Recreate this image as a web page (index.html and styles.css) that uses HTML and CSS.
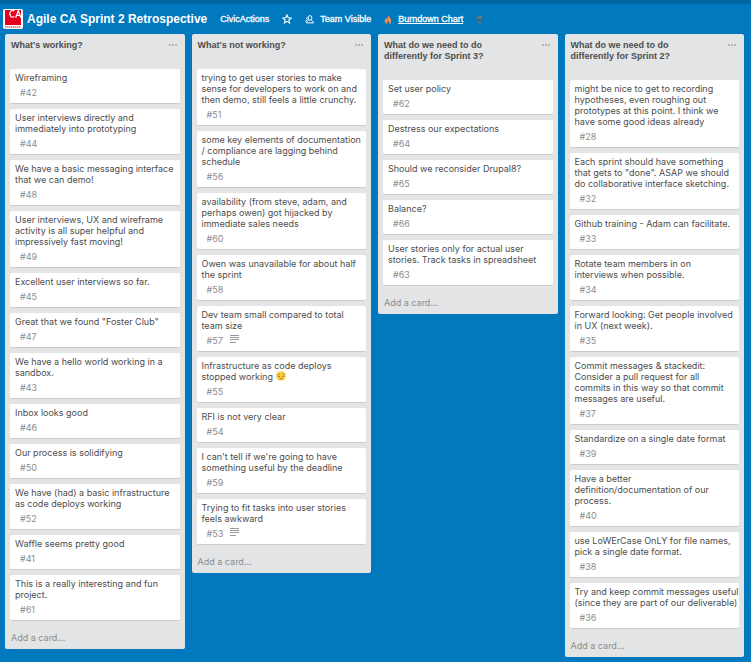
FILE: index.html
```html
<!DOCTYPE html>
<html lang="en">
<head>
<meta charset="utf-8">
<title>Agile CA Sprint 2 Retrospective</title>
<link rel="stylesheet" href="styles.css">
</head>
<body>
<svg class="defs" aria-hidden="true">
  <symbol id="lines" viewBox="0 0 9 8"><path d="M0 .5h9M0 2.500h9M0 4.500h9M0 7.500h6" stroke="#999" stroke-width="1"/></symbol>
  <symbol id="dots" viewBox="0 0 8 2"><path d="M0 0h2v2H0zM3 0h2v2H3zM6 0h2v2H6z" fill="#b3b5b7"/></symbol>
</svg>
<header class="board-header">
  <svg class="logo" viewBox="0 0 20 20" aria-hidden="true">
    <rect width="20" height="20" rx="2" fill="#fff"/>
    <rect x="2" y="1" width="16" height="15" fill="#e4001b"/>
    <path d="M11.300 2.200C9.500.6 6.800 1.800 6.800 4.800s2.700 4.300 4.500 2.600M12.700 8.800 15.300 1.500 17.900 8.800M13.600 6.400h3.400" fill="none" stroke="#fff" stroke-width="1.200"/>
    <path d="M2 18h16" stroke="#e86a76" stroke-width="1.500" stroke-dasharray="1.500 .5"/>
  </svg>
  <h1>Agile CA Sprint 2 Retrospective</h1>
  <nav class="board-nav">
    <a class="org" href="#">CivicActions</a>
    <button class="star" type="button" aria-label="Star board"><svg width="10" height="10" viewBox="0 0 10 10"><path d="M5 .9 6.200 3.700 9.200 4 6.900 6 7.600 9 5 7.400 2.400 9 3.100 6 .8 4 3.800 3.700z" fill="none" stroke="#fff" stroke-width="1.100"/></svg></button>
    <button class="team" type="button"><svg width="9" height="9" viewBox="0 0 9 9" aria-hidden="true"><ellipse cx="5" cy="2.900" rx="1.900" ry="2.300" fill="none" stroke="#fff"/><path d="M3.700 4.800C3.600 6 1.600 6 1.500 7.900h7C8.400 6 6.400 6 6.300 4.800M2.400 2.200C1.200 3 1.800 4.400 2.200 4.800 1.800 5.500.6 5.600.4 7" fill="none" stroke="#fff"/></svg>Team Visible</button>
    <a class="burndown" href="#"><svg width="8" height="9" viewBox="0 0 8 9" aria-hidden="true"><path d="M4.200 0C4.600 1.800 7.300 3.200 7.300 6 7.300 7.700 6.300 9 5 9c.5-1.200 0-2.200-.9-3C3.300 6.900 2.700 7.700 3.100 9 1.700 8.700.7 7.500.7 6c0-1.200.6-2.200 1.400-3l.6 1.300C3.900 3 4.300 1.700 4.200 0z" fill="#f08a4b"/></svg><span>Burndown Chart</span></a>
    <svg class="status" width="7" height="9" viewBox="0 0 7 9" aria-hidden="true"><rect x=".3" y=".5" width="6.400" height="8" rx="2.800" fill="#2f6f90"/><path d="M.6 3.200C1 1.200 2 .5 3.500.5s2.500.7 2.900 2.700z" fill="#5c7f86"/><path d="M1.500 7.500h4" stroke="#5c7f86"/></svg>
  </nav>
</header>
<main class="board">
  <section class="list">
    <header><h2>What's working?</h2><button type="button" aria-label="List menu"><svg><use href="#dots"/></svg></button></header>
    <ul>
      <li><p>Wireframing</p><span>#42</span></li>
      <li><p>User interviews directly and<br>immediately into prototyping</p><span>#44</span></li>
      <li><p>We have a basic messaging interface<br>that we can demo!</p><span>#48</span></li>
      <li><p>User interviews, UX and wireframe<br>activity is all super helpful and<br>impressively fast moving!</p><span>#49</span></li>
      <li><p>Excellent user interviews so far.</p><span>#45</span></li>
      <li><p>Great that we found "Foster Club"</p><span>#47</span></li>
      <li><p>We have a hello world working in a<br>sandbox.</p><span>#43</span></li>
      <li><p>Inbox looks good</p><span>#46</span></li>
      <li><p>Our process is solidifying</p><span>#50</span></li>
      <li><p>We have (had) a basic infrastructure<br>as code deploys working</p><span>#52</span></li>
      <li><p>Waffle seems pretty good</p><span>#41</span></li>
      <li><p>This is a really interesting and fun<br>project.</p><span>#61</span></li>
    </ul>
    <button class="add" type="button">Add a card…</button>
  </section>
  <section class="list">
    <header><h2>What's not working?</h2><button type="button" aria-label="List menu"><svg><use href="#dots"/></svg></button></header>
    <ul>
      <li><p>trying to get user stories to make<br>sense for developers to work on and<br>then demo, still feels a little crunchy.</p><span>#51</span></li>
      <li><p>some key elements of documentation<br>/ compliance are lagging behind<br>schedule</p><span>#56</span></li>
      <li><p>availability (from steve, adam, and<br>perhaps owen) got hijacked by<br>immediate sales needs</p><span>#60</span></li>
      <li><p>Owen was unavailable for about half<br>the sprint</p><span>#58</span></li>
      <li><p>Dev team small compared to total<br>team size</p><span>#57 <svg><use href="#lines"/></svg></span></li>
      <li><p>Infrastructure as code deploys<br>stopped working <svg class="emoji" viewBox="0 0 10 10" role="img" aria-label="Disappointed face"><circle cx="5" cy="5" r="4.800" fill="#fbcb45"/><path d="M1.500 3.700 3.500 3M6.500 3l2 .7M2 5.300q1 .8 2-.1M6 5.200q1 .9 2 .1M3.400 8q1.600-1.500 3.200 0" fill="none" stroke="#8a5a1c" stroke-width=".7"/></svg></p><span>#55</span></li>
      <li><p>RFI is not very clear</p><span>#54</span></li>
      <li><p>I can't tell if we're going to have<br>something useful by the deadline</p><span>#59</span></li>
      <li><p>Trying to fit tasks into user stories<br>feels awkward</p><span>#53 <svg><use href="#lines"/></svg></span></li>
    </ul>
    <button class="add" type="button">Add a card…</button>
  </section>
  <section class="list">
    <header><h2>What do we need to do<br>differently for Sprint 3?</h2><button type="button" aria-label="List menu"><svg><use href="#dots"/></svg></button></header>
    <ul>
      <li><p>Set user policy</p><span>#62</span></li>
      <li><p>Destress our expectations</p><span>#64</span></li>
      <li><p>Should we reconsider Drupal8?</p><span>#65</span></li>
      <li><p>Balance?</p><span>#66</span></li>
      <li><p>User stories only for actual user<br>stories. Track tasks in spreadsheet</p><span>#63</span></li>
    </ul>
    <button class="add" type="button">Add a card…</button>
  </section>
  <section class="list">
    <header><h2>What do we need to do<br>differently for Sprint 2?</h2><button type="button" aria-label="List menu"><svg><use href="#dots"/></svg></button></header>
    <ul>
      <li><p>might be nice to get to recording<br>hypotheses, even roughing out<br>prototypes at this point. I think we<br>have some good ideas already</p><span>#28</span></li>
      <li><p>Each sprint should have something<br>that gets to "done". ASAP we should<br>do collaborative interface sketching.</p><span>#32</span></li>
      <li><p>Github training - Adam can facilitate.</p><span>#33</span></li>
      <li><p>Rotate team members in on<br>interviews when possible.</p><span>#34</span></li>
      <li><p>Forward looking: Get people involved<br>in UX (next week).</p><span>#35</span></li>
      <li><p>Commit messages &amp; stackedit:<br>Consider a pull request for all<br>commits in this way so that commit<br>messages are useful.</p><span>#37</span></li>
      <li><p>Standardize on a single date format</p><span>#39</span></li>
      <li><p>Have a better<br>definition/documentation of our<br>process.</p><span>#40</span></li>
      <li><p>use LoWErCase OnLY for file names,<br>pick a single date format.</p><span>#38</span></li>
      <li><p>Try and keep commit messages useful<br>(since they are part of our deliverable)</p><span>#36</span></li>
    </ul>
    <button class="add" type="button">Add a card…</button>
  </section>
</main>
</body>
</html>
```
FILE: styles.css
```css
* {
  box-sizing: border-box;
  margin: 0;
  padding: 0;
}

body {
  min-height: 100vh;
  border-top: 4px solid #0067a3;
  border-bottom: 1px solid #0067a3;
  background: #0079bf;
  color: #4d4d4d;
  font: 9px/11px "Liberation Sans", Arial, sans-serif;
}

button {
  border: 0;
  background: none;
  color: inherit;
  font: inherit;
  cursor: pointer;
}

a {
  color: inherit;
  text-decoration: none;
}

.defs {
  display: none;
}

.board-header {
  display: flex;
  align-items: center;
  height: 30px;
  padding-left: 3px;
  color: #fff;
}

.logo {
  width: 20px;
  height: 20px;
  margin-right: 4px;
}

h1 {
  font-size: 12px;
  line-height: 16px;
  white-space: nowrap;
}

.board-nav {
  display: flex;
  align-items: center;
  gap: 13px;
  margin-left: 13px;
  -webkit-text-stroke: 0.3px #fff;
  white-space: nowrap;
}

.board-nav svg {
  display: block;
  flex: none;
}

.team,
.burndown {
  display: flex;
  align-items: center;
  gap: 6px;
}

.burndown span {
  text-decoration: underline;
}

.board {
  display: grid;
  grid-template-columns: repeat(4, minmax(0, 1fr));
  align-items: start;
  gap: 7px;
  padding: 0 7px 5px 5px;
}

.list {
  padding: 0 5px;
  border-radius: 2px;
  background: #e2e4e6;
}

.list header {
  display: flex;
  justify-content: space-between;
  align-items: flex-start;
  padding: 6px 1px 18px;
}

.list h2 {
  font-size: 9px;
  line-height: 11px;
}

.list header button {
  padding: 4px 2px;
}

.list header svg {
  display: block;
  width: 8px;
  height: 2px;
}

.list ul {
  display: grid;
  gap: 5px;
  list-style: none;
}

.list li {
  padding: 3px 0 5px 5px;
  border-bottom: 1px solid #c9cbcd;
  border-radius: 2px;
  background: #fff;
  font-family: Inter, "Liberation Sans", sans-serif;
  white-space: nowrap;
}

.list li span {
  display: flex;
  align-items: flex-start;
  gap: 7px;
  margin-top: 4px;
  padding-left: 5px;
  color: #8c8c8c;
}

.list li span svg {
  width: 9px;
  height: 8px;
}

.list .emoji {
  width: 10px;
  height: 10px;
  margin-left: 1px;
  vertical-align: top;
}

.add {
  display: block;
  width: 100%;
  padding: 11px 1px 6px;
  color: #8c8c8c;
  font-family: Inter, "Liberation Sans", sans-serif;
  text-align: left;
}
```
